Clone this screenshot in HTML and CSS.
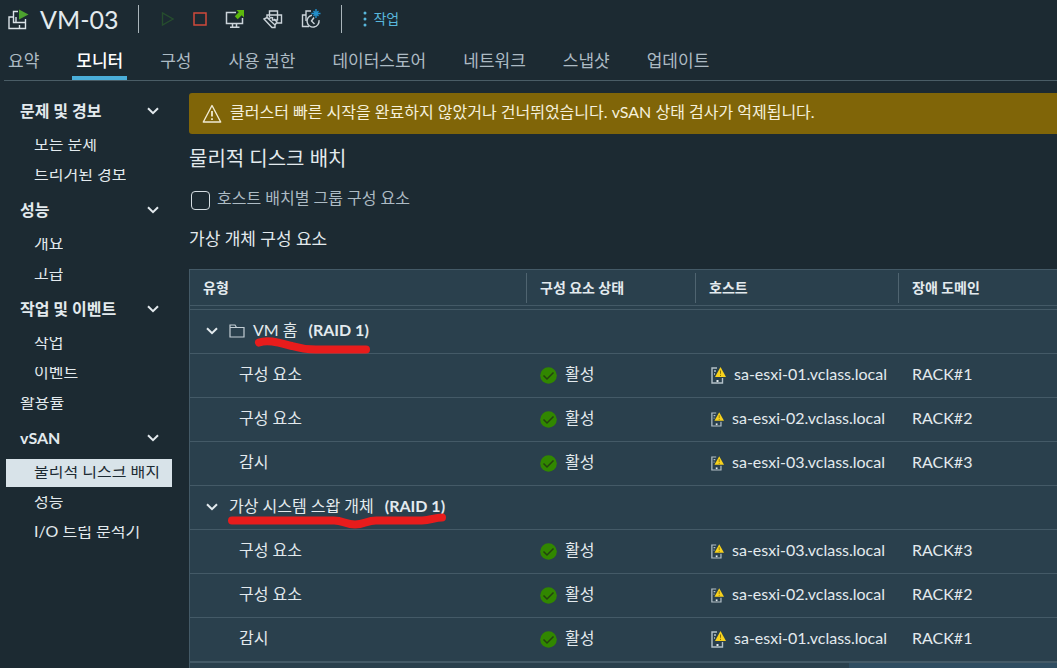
FILE: index.html
```
<!DOCTYPE html>
<html lang="ko">
<head>
    <meta charset="UTF-8">
    <meta name="viewport" content="width=device-width, initial-scale=1.0">
    <title>VM-03</title>
    <link rel="stylesheet" href="styles.css">
</head>
<body>
    <!-- Shared icons -->
    <svg class="symbols" aria-hidden="true">
        <symbol id="chevron" viewBox="0 0 12 8">
            <path d="M1 1.2l5 5 5-5" fill="none" stroke="#e3eaee" stroke-width="2"/>
        </symbol>
        <symbol id="check" viewBox="0 0 17 17">
            <circle cx="8.500" cy="8.500" r="8.300" fill="#318700"/>
            <path d="M3.500 8.500l3.500 3.500 6.500-6.500" fill="none" stroke="#23420f" stroke-width="1.500"/>
        </symbol>
        <symbol id="host" viewBox="0 0 15 17">
            <path d="M6 1H1v15h10.500v-5M3 4h2M3 7h1" fill="none" stroke="#b3c0c8" stroke-width="1.400"/>
            <path d="M5.500 13h2v2h-2z" fill="#e3eaee"/>
            <path d="M9.500 0L15 10H4z" fill="#f8d21c"/>
            <path d="M9.500 3.500v3.300M9.500 7.800v1.200" stroke="#8a7206" stroke-width="1"/>
        </symbol>
    </svg>

    <header class="header">
        <div class="title-bar">
            <svg class="vm-icon" width="21" height="21" viewBox="0 0 21 21" fill="none" stroke="#dbe3e8" stroke-width="1.400">
                <path d="M10 2.500H5.500v11H11M5 8H1v11.500h10.500V16M8 8v5.500M8 13.500h9.500V10M17.500 13v6.500h-6"/>
                <path d="M11 .5v10l9.500-5z" fill="#4da32f" stroke="none"/>
            </svg>
            <h1>VM-03</h1>
            <div class="toolbar">
                <button type="button" aria-label="전원 켜기">
                    <svg width="14" height="16" viewBox="0 0 14 16"><path d="M1.500 2v12l10.500-6z" fill="none" stroke="#264d2e" stroke-width="1.400"/></svg>
                </button>
                <button type="button" aria-label="전원 끄기">
                    <svg width="14" height="14" viewBox="0 0 14 14"><path d="M1 1h12v12H1z" fill="none" stroke="#d04a3b" stroke-width="1.500"/></svg>
                </button>
                <button type="button" aria-label="콘솔 시작">
                    <svg width="20" height="20" viewBox="0 0 20 20">
                        <path d="M11 3.500H1.500v11h16V9M7.500 15v3M11.500 15v3M5 18.300h9.500" fill="none" stroke="#cbd4da" stroke-width="1.500"/>
                        <path d="M11.500 1H19v7.500l-2.300-2.300-4 4-2.900-2.900 4-4z" fill="#5db80d"/>
                    </svg>
                </button>
                <button type="button" aria-label="마이그레이션">
                    <svg width="20" height="20" viewBox="0 0 20 20" fill="none" stroke="#cbd4da" stroke-width="1.400">
                        <path d="M6.500 8V2h8v4M10 6h8.500v8h-5M4 9V6h6M14.500 6v5H9.500V8"/>
                        <path d="M1 10l3-1.500 8 7.500v2.500H9zM5 9.500l4-1M12 16l2-3-3-3"/>
                    </svg>
                </button>
                <button type="button" aria-label="스냅샷 생성">
                    <svg width="20" height="20" viewBox="0 0 20 20" fill="none" stroke="#cbd4da" stroke-width="1.400">
                        <path d="M10 2H5v5M5 6H1.500v11.500H8M5 7v5"/>
                        <path d="M11 6.200a6 6 0 1 0 7 5"/>
                        <path d="M13 8.500L10.500 12l3 3"/>
                        <path d="M15 0v9M10.500 4.500h9M12.500 2l5 5M17.500 2l-5 5" stroke="#228fcb" stroke-width="1.400"/>
                    </svg>
                </button>
            </div>
            <button type="button" class="actions">
                <svg width="4" height="16" viewBox="0 0 4 16" fill="#58b7dc"><circle cx="2" cy="2" r="1.500"/><circle cx="2" cy="8" r="1.500"/><circle cx="2" cy="14" r="1.500"/></svg>
                작업
            </button>
        </div>
        <nav class="tabs">
            <a href="#">요약</a>
            <a href="#" class="active">모니터</a>
            <a href="#">구성</a>
            <a href="#">사용 권한</a>
            <a href="#">데이터스토어</a>
            <a href="#">네트워크</a>
            <a href="#">스냅샷</a>
            <a href="#">업데이트</a>
        </nav>
    </header>

    <div class="content">
        <nav class="sidebar">
            <button type="button" class="group">문제 및 경보<svg width="12" height="8"><use href="#chevron"/></svg></button>
            <a href="#" class="item"><span>모든 문제</span></a>
            <a href="#" class="item"><span>트리거된 경보</span></a>
            <button type="button" class="group">성능<svg width="12" height="8"><use href="#chevron"/></svg></button>
            <a href="#" class="item"><span>개요</span></a>
            <a href="#" class="item"><span>고급</span></a>
            <button type="button" class="group">작업 및 이벤트<svg width="12" height="8"><use href="#chevron"/></svg></button>
            <a href="#" class="item"><span>작업</span></a>
            <a href="#" class="item"><span>이벤트</span></a>
            <a href="#" class="item top"><span>활용률</span></a>
            <button type="button" class="group">vSAN<svg width="12" height="8"><use href="#chevron"/></svg></button>
            <a href="#" class="item selected"><span>물리적 디스크 배치</span></a>
            <a href="#" class="item"><span>성능</span></a>
            <a href="#" class="item"><span>I/O 트립 분석기</span></a>
        </nav>

        <main class="main">
            <div class="alert">
                <svg width="20" height="20" viewBox="0 0 20 20" fill="none" stroke="#f0ead2" stroke-width="1.400" stroke-linejoin="round">
                    <path d="M10 1.500L18.700 18H1.300z"/>
                    <path d="M10 7v5.500M10 14.200v1.800" stroke-width="1.800"/>
                </svg>
                <span>클러스터 빠른 시작을 완료하지 않았거나 건너뛰었습니다. vSAN 상태 검사가 억제됩니다.</span>
            </div>
            <h2>물리적 디스크 배치</h2>
            <div class="check-row">
                <input type="checkbox" id="group-by-host">
                <label for="group-by-host">호스트 배치별 그룹 구성 요소</label>
            </div>
            <h3>가상 개체 구성 요소</h3>

            <table class="grid">
                <colgroup>
                    <col class="col-type">
                    <col class="col-state">
                    <col class="col-host">
                    <col>
                </colgroup>
                <thead>
                    <tr>
                        <th><span>유형</span></th>
                        <th><span>구성 요소 상태</span></th>
                        <th><span>호스트</span></th>
                        <th><span>장애 도메인</span></th>
                    </tr>
                </thead>
                <tbody>
                    <tr>
                        <td colspan="4">
                            <div class="object">
                                <svg width="12" height="8"><use href="#chevron"/></svg>
                                <svg class="folder" width="16" height="14" viewBox="0 0 16 14"><path d="M1 3.500h14V13H1zM1 3.500V1h5l1.500 2.500" fill="none" stroke="#c3ced5" stroke-width="1.200"/></svg>
                                <span>VM 홈</span>
                                <strong>(RAID 1)</strong>
                                <svg class="mark mark-home" width="118" height="18" viewBox="0 0 118 18"><path d="M5 5.500C14 2 26 6 38 9c10 3 14 3.500 24 3.500h50" fill="none" stroke="#e81c1c" stroke-width="8" stroke-linecap="round"/></svg>
                            </div>
                        </td>
                    </tr>
                    <tr>
                        <td class="name">구성 요소</td>
                        <td><div class="cell"><svg width="17" height="17"><use href="#check"/></svg>활성</div></td>
                        <td><div class="cell host"><svg width="15" height="17"><use href="#host"/></svg>sa-esxi-01.vclass.local</div></td>
                        <td>RACK#1</td>
                    </tr>
                    <tr>
                        <td class="name">구성 요소</td>
                        <td><div class="cell"><svg width="17" height="17"><use href="#check"/></svg>활성</div></td>
                        <td><div class="cell host"><svg width="13" height="15"><use href="#host"/></svg>sa-esxi-02.vclass.local</div></td>
                        <td>RACK#2</td>
                    </tr>
                    <tr>
                        <td class="name">감시</td>
                        <td><div class="cell"><svg width="17" height="17"><use href="#check"/></svg>활성</div></td>
                        <td><div class="cell host"><svg width="13" height="15"><use href="#host"/></svg>sa-esxi-03.vclass.local</div></td>
                        <td>RACK#3</td>
                    </tr>
                    <tr>
                        <td colspan="4">
                            <div class="object">
                                <svg width="12" height="8"><use href="#chevron"/></svg>
                                <span>가상 시스템 스왑 개체</span>
                                <strong>(RAID 1)</strong>
                                <svg class="mark mark-swap" width="220" height="18" viewBox="0 0 220 18"><path d="M5 8.500h102c9 0 12 4 21 4s12-4 21-4h46c9 0 12-3 20-3" fill="none" stroke="#e81c1c" stroke-width="8" stroke-linecap="round"/></svg>
                            </div>
                        </td>
                    </tr>
                    <tr>
                        <td class="name">구성 요소</td>
                        <td><div class="cell"><svg width="17" height="17"><use href="#check"/></svg>활성</div></td>
                        <td><div class="cell host"><svg width="13" height="15"><use href="#host"/></svg>sa-esxi-03.vclass.local</div></td>
                        <td>RACK#3</td>
                    </tr>
                    <tr>
                        <td class="name">구성 요소</td>
                        <td><div class="cell"><svg width="17" height="17"><use href="#check"/></svg>활성</div></td>
                        <td><div class="cell host"><svg width="13" height="15"><use href="#host"/></svg>sa-esxi-02.vclass.local</div></td>
                        <td>RACK#2</td>
                    </tr>
                    <tr>
                        <td class="name">감시</td>
                        <td><div class="cell"><svg width="17" height="17"><use href="#check"/></svg>활성</div></td>
                        <td><div class="cell host"><svg width="15" height="17"><use href="#host"/></svg>sa-esxi-01.vclass.local</div></td>
                        <td>RACK#1</td>
                    </tr>
                </tbody>
            </table>
            <div class="grid-footer"><div class="scrollbar"></div></div>
        </main>
    </div>
</body>
</html>
```
FILE: styles.css
```
* {
    box-sizing: border-box;
}
body {
    margin: 0;
    background-color: #1c2a32;
    color: #e3eaee;
    font-family: Lato, "Noto Sans CJK KR", sans-serif;
    font-size: 16px;
    line-height: 24px;
}
h1, h2, h3 {
    margin: 0;
    font-weight: 400;
}
a {
    color: inherit;
    text-decoration: none;
}
button {
    display: flex;
    align-items: center;
    padding: 0;
    border: 0;
    background: none;
    color: inherit;
    font: inherit;
    cursor: pointer;
}
svg {
    flex: none;
}
.symbols {
    position: absolute;
    width: 0;
    height: 0;
}

/* Header */
.title-bar {
    display: flex;
    align-items: center;
    height: 38px;
    padding-left: 8px;
}
.title-bar h1 {
    padding: 0 20px 0 11px;
    font-size: 25px;
}
.toolbar {
    display: flex;
    align-items: center;
    gap: 18px;
    height: 28px;
    padding: 0 20px 0 22px;
    border: solid #aab5bb;
    border-width: 0 1px;
}
.actions {
    gap: 6px;
    margin-left: 21px;
    color: #58b7dc;
    font-size: 14px;
}
.tabs {
    display: flex;
    gap: 29px;
    height: 43px;
    margin-left: 4px;
    border-bottom: 1px solid #4a5d66;
    color: #adbbc4;
    font-size: 17px;
}
.tabs a {
    padding: 11px 4px 0;
    white-space: nowrap;
}
.tabs .active {
    border-bottom: 4px solid #4aaed9;
    color: #fff;
    font-weight: 500;
}

/* Layout */
.content {
    display: flex;
}
.sidebar {
    flex: none;
    width: 172px;
    padding: 10px 0 0 6px;
}
.main {
    flex: 1;
    min-width: 0;
    padding: 12px 0 0 17px;
}

/* Sidebar */
.group {
    justify-content: space-between;
    width: 100%;
    height: 39px;
    padding: 0 13px 0 14px;
    font-weight: 700;
}
.item {
    display: flex;
    align-items: center;
    height: 28px;
    margin-top: 2px;
    padding-left: 28px;
}
.item span {
    display: flex;
    align-items: flex-end;
    height: 14px;
    line-height: 18px;
    overflow: hidden;
    white-space: nowrap;
}
.item.top {
    padding-left: 14px;
}
.item.selected {
    background-color: #d8e3e9;
    color: #1c2a32;
}

/* Main */
.alert {
    display: flex;
    align-items: center;
    gap: 8px;
    height: 41px;
    padding-left: 13px;
    border-radius: 3px 0 0 3px;
    background-color: #806508;
    color: #f5f0dc;
    white-space: nowrap;
    overflow: hidden;
}
.alert span,
.check-row label {
    padding-bottom: 4px;
}
.main h2 {
    padding-top: 12px;
    font-size: 20px;
}
.check-row {
    display: flex;
    align-items: center;
    gap: 7px;
    margin-top: 16px;
    padding-left: 2px;
    color: #adbbc4;
}
.check-row input {
    appearance: none;
    width: 19px;
    height: 19px;
    margin: 0;
    border: 1px solid #d5dde2;
    border-radius: 4px;
}
.main h3 {
    padding: 13px 0 18px;
    font-size: 17px;
}

/* Table */
.grid {
    width: 100%;
    table-layout: fixed;
    border-spacing: 0;
    border: solid #445a67;
    border-width: 1px 0 0 1px;
    background-color: #2a404d;
}
.col-type {
    width: 336px;
}
.col-state {
    width: 169px;
}
.col-host {
    width: 203px;
}
.grid th {
    padding: 3px 0 2px;
    border-bottom: 1px solid #445a67;
    font-size: 14px;
    font-weight: 700;
    text-align: left;
}
.grid th span {
    display: block;
    padding-left: 13px;
    border-left: 1px solid #4f6470;
    line-height: 30px;
}
.grid th:first-child span {
    border-left: 0;
}
.grid tbody::before {
    content: "";
    display: block;
    height: 3px;
}
.grid td {
    height: 44px;
    padding: 0 0 4px 14px;
    border-top: 1px solid #445a67;
    white-space: nowrap;
}
.grid .name {
    padding-left: 49px;
}
.cell {
    display: flex;
    align-items: center;
    gap: 8px;
}
.cell svg,
.object svg {
    margin-top: 3px;
}
.host {
    padding-left: 2px;
}
.object {
    position: relative;
    display: flex;
    align-items: center;
    gap: 11px;
    padding-left: 2px;
}
.object .folder {
    margin-right: -3px;
}
.object strong {
    font-weight: 700;
}
.object .mark {
    position: absolute;
    margin: 0;
}
.mark-home {
    left: 50px;
    top: 19px;
}
.mark-swap {
    left: 23px;
    top: 18px;
}
.grid-footer {
    display: flex;
    justify-content: flex-end;
    height: 7px;
    border: solid #445a67;
    border-width: 2px 0 0 1px;
    background-color: #2a404d;
}
.scrollbar {
    width: 24%;
    background-color: #2f4d61;
}
```
